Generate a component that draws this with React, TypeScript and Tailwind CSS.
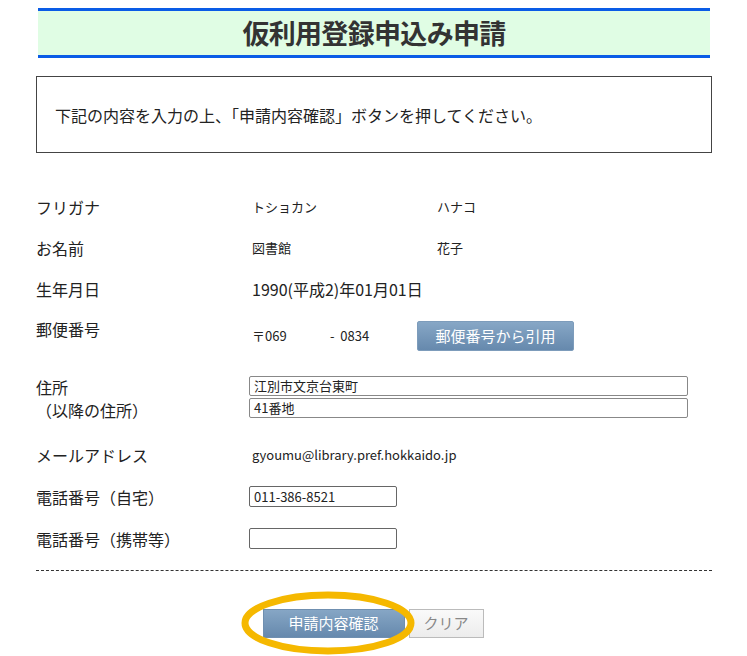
export default function App() {
  const font = { fontFamily: '"Noto Sans CJK JP", "Liberation Sans", sans-serif' };
  return (
    <div className="w-[747px] h-[656px] bg-white text-[#222] relative overflow-hidden" style={font}>
      <div className="pt-[8px] px-[38px] pr-[37px]">
        <div className="h-[50px] bg-[#e0fde4] border-t-[3px] border-b-[3px] border-[#0a5ce6] flex items-center justify-center">
          <span className="text-[27px] font-bold text-[#333] tracking-tight">仮利用登録申込み申請</span>
        </div>
      </div>
      <div className="mt-[18px] mx-[36px] w-[676px] h-[77px] border border-[#444] flex items-center pl-[18px] text-[16px]">
        下記の内容を入力の上、「申請内容確認」ボタンを押してください。
      </div>
      <div className="mx-[36px] mt-[33px] text-[16px]">
        <div className="flex h-[41px] items-center">
          <div className="w-[216px]">フリガナ</div>
          <div className="w-[185px] text-[13px]">トショカン</div>
          <div className="text-[13px]">ハナコ</div>
        </div>
        <div className="flex h-[41px] items-center">
          <div className="w-[216px]">お名前</div>
          <div className="w-[185px] text-[13px]">図書館</div>
          <div className="text-[13px]">花子</div>
        </div>
        <div className="flex h-[42px] items-center">
          <div className="w-[216px]">生年月日</div>
          <div>1990(平成2)年01月01日</div>
        </div>
        <div className="flex h-[54px] items-start pt-[7px]">
          <div className="w-[216px]">郵便番号</div>
          <div className="flex items-center mt-[4px]">
            <span className="text-[13px] w-[78px]">〒069</span>
            <span className="text-[13px] w-[87px]">-&nbsp;&nbsp;0834</span>
            <button className="w-[157px] h-[30px] text-white text-[15px] rounded-[2px] border border-[#7d9cbb] bg-gradient-to-b from-[#87a7c6] to-[#6689ad]">郵便番号から引用</button>
          </div>
        </div>
        <div className="flex h-[70px] items-start pt-[12px]">
          <div className="w-[213px] leading-[23px]">
            <div>住所</div>
            <div>（以降の住所）</div>
          </div>
          <div className="flex flex-col gap-[2px]">
            <div className="w-[439px] h-[20px] border border-[#888] rounded-[2px] text-[13px] leading-[18px] px-[4px]">江別市文京台東町</div>
            <div className="w-[439px] h-[20px] border border-[#888] rounded-[2px] text-[13px] leading-[18px] px-[4px]">41番地</div>
          </div>
        </div>
        <div className="flex h-[42px] items-center">
          <div className="w-[216px]">メールアドレス</div>
          <div className="text-[13px]">gyoumu@library.pref.hokkaido.jp</div>
        </div>
        <div className="flex h-[41px] items-center">
          <div className="w-[213px]">電話番号（自宅）</div>
          <div className="w-[148px] h-[21px] border border-[#666] rounded-[2px] text-[13px] leading-[19px] px-[4px]">011-386-8521</div>
        </div>
        <div className="flex h-[43px] items-center">
          <div className="w-[213px]">電話番号（携帯等）</div>
          <div className="w-[148px] h-[21px] border border-[#666] rounded-[2px]"></div>
        </div>
        <div className="border-t border-dashed border-[#333] mt-[10px] w-[676px]"></div>
        <div className="flex justify-center gap-[4px] mt-[38px] ml-[-1px]">
          <button className="w-[142px] h-[29px] text-white text-[15px] border border-[#6f8fb0] bg-gradient-to-b from-[#86a6c5] to-[#6689ad]">申請内容確認</button>
          <button className="w-[75px] h-[29px] text-[#888] text-[15px] border border-[#bbb] bg-gradient-to-b from-[#fafafa] to-[#ececec]">クリア</button>
        </div>
      </div>
      <svg className="absolute left-[240px] top-[590px]" width="176" height="66">
        <ellipse cx="88" cy="33" rx="83" ry="28" fill="none" stroke="#f5b800" strokeWidth="7" />
      </svg>
    </div>
  );
}
